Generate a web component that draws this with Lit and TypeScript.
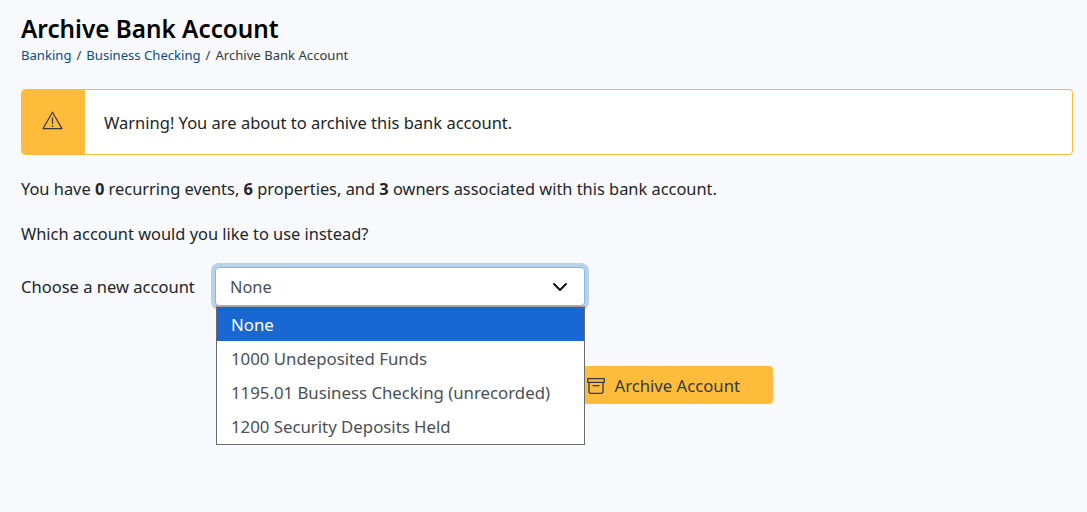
import { LitElement, css, html } from "lit";
import { customElement } from "lit/decorators.js";

const OPTIONS = [
  "None",
  "1000 Undeposited Funds",
  "1195.01 Business Checking (unrecorded)",
  "1200 Security Deposits Held",
];

@customElement("app-root")
export class AppRoot extends LitElement {
  override render() {
    return html`
      <main class="page">
        <h1 class="title">Archive Bank Account</h1>
        <nav class="crumbs">
          <a>Banking</a><span class="sep">/</span><a>Business Checking</a><span class="sep">/</span><span>Archive Bank Account</span>
        </nav>

        <div class="alert">
          <div class="alert-icon">
            <svg width="21" height="19" viewBox="0 0 21 19" fill="none" stroke="currentColor" stroke-width="1.2" stroke-linejoin="round" stroke-linecap="round">
              <path d="M10.5 1.2L20 17.6H1z"/>
              <path d="M10.5 6.8v5.6"/>
              <path d="M10.5 14.9v.3" stroke-width="1.5"/>
            </svg>
          </div>
          <div class="alert-text">Warning! You are about to archive this bank account.</div>
        </div>

        <p class="line">You have <b>0</b> recurring events, <b>6</b> properties, and <b>3</b> owners associated with this bank account.</p>
        <p class="line question">Which account would you like to use instead?</p>

        <div class="field">
          <label class="label">Choose a new account</label>
          <div class="select-wrap">
            <div class="select">
              <span>None</span>
              <svg class="chevron" width="16" height="16" viewBox="0 0 16 16" fill="none" stroke="#111" stroke-width="2" stroke-linecap="round" stroke-linejoin="round">
                <path d="M2 5l6 6 6-6"/>
              </svg>
            </div>
            <ul class="menu">
              ${OPTIONS.map((o, i) => html`<li class=${i === 0 ? "option active" : "option"}>${o}</li>`)}
            </ul>
          </div>
        </div>

        <div class="actions">
          <button class="archive" type="button">
            <svg width="18" height="16" viewBox="0 0 18 16" fill="none" stroke="currentColor" stroke-width="1.3" stroke-linejoin="round">
              <rect x="0.65" y="0.65" width="16.7" height="3.7" rx="0.6"/>
              <path d="M2 4.4v9.2a1.7 1.7 0 0 0 1.7 1.7h10.6a1.7 1.7 0 0 0 1.7-1.7V4.4"/>
              <path d="M6 7.6h6" stroke-linecap="round"/>
            </svg>
            Archive Account
          </button>
        </div>
      </main>
    `;
  }

  static override styles = css`
    :host {
      display: block;
      min-height: 512px;
      background: #f8f9fd;
      color: #212529;
      font: 16.4px/24px "Noto Sans", "Open Sans", sans-serif;
    }

    .page {
      display: flex;
      flex-direction: column;
      padding: 12px 14px 0 21px;
    }

    /* header */
    .title {
      margin: 0;
      font-size: 24.3px;
      line-height: 33px;
      font-weight: 600;
      color: #000;
    }
    .crumbs {
      display: flex;
      gap: 5px;
      font-size: 13.1px;
      line-height: 20px;
      color: #343a40;
    }
    .crumbs a { color: #0d4c8c; }

    /* warning */
    .alert {
      display: flex;
      margin-top: 24px;
      height: 66px;
      box-sizing: border-box;
      background: #fff;
      border: 1px solid #ffbc3a;
      border-radius: 4px;
      overflow: hidden;
    }
    .alert-icon {
      flex: 0 0 63px;
      display: flex;
      align-items: center;
      justify-content: center;
      padding: 0 2px 4px 0;
      box-sizing: border-box;
      background: #ffbc3a;
      color: #343a40;
    }
    .alert-text {
      padding: 21px 0 0 19px;
      font-size: 16.5px;
    }

    .line {
      margin: 22px 0 0;
    }
    .line b { font-weight: 700; }
    .question { margin-top: 21px; }

    /* select */
    .field {
      display: flex;
      align-items: center;
      margin-top: 21px;
    }
    .label {
      width: 194px;
      font-size: 16.55px;
    }
    .select-wrap { position: relative; }
    .select {
      display: flex;
      align-items: center;
      justify-content: space-between;
      box-sizing: border-box;
      width: 370px;
      height: 39px;
      padding: 0 16px 0 14px;
      background: #fff;
      border: 1px solid #86b7e4;
      border-radius: 4px;
      box-shadow: 0 0 0 4px #b8d3e8;
      color: #495057;
    }
    .menu {
      position: absolute;
      top: 39px;
      left: 1px;
      z-index: 2;
      box-sizing: border-box;
      width: 369px;
      margin: 0;
      padding: 0 0 1px;
      list-style: none;
      background: #fff;
      border: 1px solid #6c6c6c;
      border-top-color: #a0a0a0;
    }
    .option {
      box-sizing: border-box;
      height: 34px;
      padding: 1px 15px 0 14px;
      font-size: 16.8px;
      line-height: 33px;
      color: #495057;
      white-space: nowrap;
    }
    .option.active {
      background: #1967d2;
      color: #fff;
    }

    /* action */
    .actions {
      display: flex;
      justify-content: flex-end;
      margin: 60px 300px 0 0;
    }
    .archive {
      display: flex;
      align-items: center;
      gap: 9px;
      height: 38px;
      padding: 1px 33px 0 32px;
      border: 0;
      border-radius: 4px;
      background: #ffbc3a;
      color: #343a40;
      font: inherit;
      font-size: 16.7px;
    }
  `;
}
